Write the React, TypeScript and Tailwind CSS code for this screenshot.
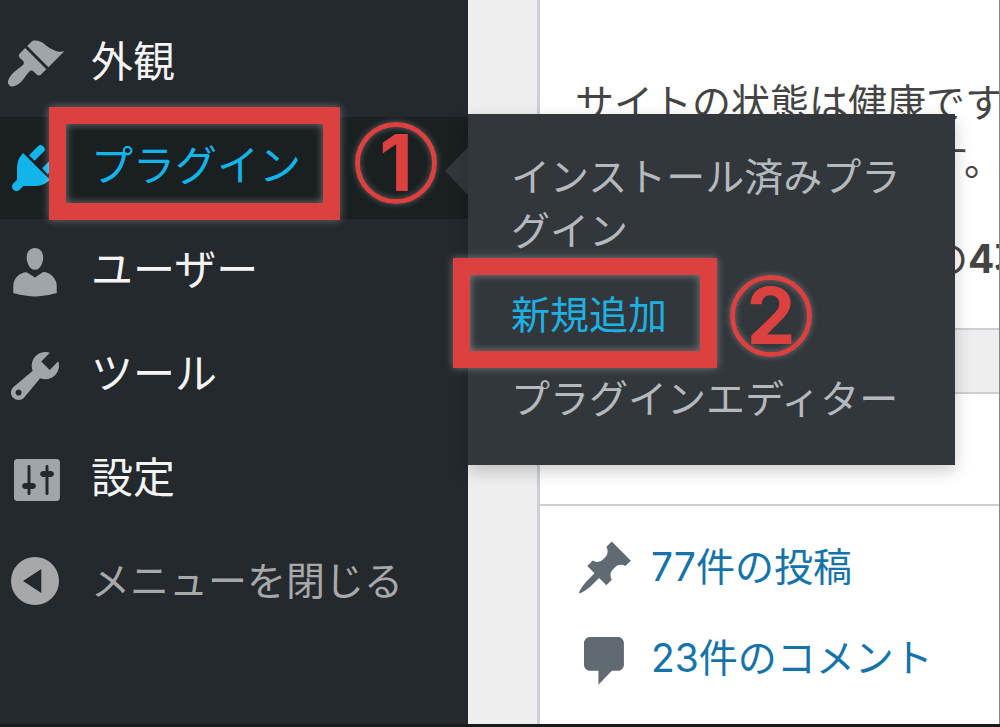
import type { ReactNode } from 'react';

const icons = {
  appearance:
    'M14.48 11.06L7.41 3.99l1.5-1.5c.5-.56 2.3-.47 3.51.32 1.21.8 1.43 1.28 2.91 2.1 1.18.64 2.45 1.26 4.45.85zm-.71.71L6.7 4.7 4.93 6.47c-.39.39-.39 1.02 0 1.41l1.06 1.06c.39.39.39 1.03 0 1.42-.6.6-1.43 1.11-2.21 1.69-.35.26-.7.53-1.01.84C1.43 14.23.4 16.08 1.4 17.07c.99 1 2.84-.03 4.18-1.36.31-.31.58-.66.85-1.02.57-.78 1.08-1.61 1.69-2.21.39-.39 1.02-.39 1.41 0l1.06 1.06c.39.39 1.02.39 1.41 0z',
  plugins:
    'M13.11 4.36L9.87 7.6 8 5.73l3.24-3.24c.35-.34 1.05-.2 1.56.32.52.51.66 1.21.31 1.55zm-8 1.77l.91-1.12 9.01 9.01-1.19.84c-.71.71-2.63 1.16-3.82 1.16H6.14L4.9 17.26c-.59.59-1.54.59-2.12 0-.59-.58-.59-1.53 0-2.12l1.24-1.24v-3.88c0-1.13.4-3.19 1.09-3.89zm7.26 3.97l3.24-3.24c.34-.35 1.04-.21 1.55.31.52.51.66 1.21.31 1.55l-3.24 3.25z',
  users:
    'M10 9.25c-2.27 0-2.73-3.44-2.73-3.44C7 4.02 7.82 2 9.97 2c2.16 0 2.98 2.02 2.71 3.81 0 0-.41 3.44-2.68 3.44zm0 2.57L12.72 10c2.39 0 4.52 2.33 4.52 4.53v2.49s-3.65 1.13-7.24 1.13c-3.65 0-7.24-1.13-7.24-1.13v-2.49c0-2.25 1.94-4.48 4.47-4.48z',
  tools:
    'M16.68 9.77c-1.34 1.34-3.3 1.67-4.95.99l-5.41 6.52c-.99.99-2.59.99-3.58 0s-.99-2.59 0-3.57l6.52-5.42c-.68-1.65-.35-3.61.99-4.95 1.28-1.28 3.12-1.62 4.72-1.06l-2.89 2.89 2.82 2.82 2.86-2.87c.53 1.58.18 3.39-1.08 4.65zM3.81 16.21c.4.39 1.04.39 1.43 0 .4-.4.4-1.04 0-1.43-.39-.4-1.03-.4-1.43 0-.39.39-.39 1.03 0 1.43z',
  settings:
    'M18.3 16V4c0-.55-.45-1-1-1H4c-.55 0-1 .45-1 1v12c0 .55.45 1 1 1h13.3c.55 0 1-.45 1-1zM8.5 11h.8c.55 0 1 .45 1 1s-.45 1-1 1h-.8v1.5c0 .28-.22.5-.5.5s-.5-.22-.5-.5V13h-.8c-.55 0-1-.45-1-1s.45-1 1-1h.8V5.5c0-.28.22-.5.5-.5s.5.22.5.5V11zm5-2h-.8c-.55 0-1-.45-1-1s.45-1 1-1h.8V5.5c0-.28.22-.5.5-.5s.5.22.5.5V7h.8c.55 0 1 .45 1 1s-.45 1-1 1h-.8v5.5c0 .28-.22.5-.5.5s-.5-.22-.5-.5V9z',
  collapse: 'M10 2a8 8 0 1 0 0 16a8 8 0 1 0 0-16zM12.1 6v8L6 10z',
  post:
    'M10.44 3.02l1.82-1.82 6.36 6.35-1.83 1.82c-1.05-.68-2.48-.57-3.41.36l-.75.75c-.92.93-1.04 2.35-.35 3.41l-1.83 1.82-2.41-2.41-2.8 2.79c-.42.42-3.38 2.71-3.8 2.29s1.86-3.39 2.28-3.81l2.79-2.79L4.1 9.36l1.83-1.82c1.05.69 2.48.57 3.4-.36l.75-.75c.93-.92 1.05-2.35.36-3.41z',
  comments: 'M5 2.7h9.3c1.1 0 2 .9 2 2v7.2c0 1.1-.9 2-2 2h-2l-4.5 4.7v-4.7H5c-1.1 0-2-.9-2-2V4.7c0-1.1.9-2 2-2z',
};

const Icon = ({ name }: { name: keyof typeof icons }) => (
  <svg viewBox="0 0 20 20" className="size-[60px] shrink-0" fill="currentColor" fillRule="evenodd" aria-hidden="true">
    <path d={icons[name]} />
  </svg>
);

const MenuLink = ({ icon, children }: { icon: keyof typeof icons; children: ReactNode }) => (
  <a href="#" className="flex h-[102px] items-center gap-[26px] pl-[5px] text-[#a0a5aa]">
    <Icon name={icon} />
    <span className="pb-[6px] text-[42px] text-[#f4f4f4]">{children}</span>
  </a>
);

// red frame and numbered circle pointing out a step
const Frame = ({ className }: { className: string }) => (
  <span
    className={`pointer-events-none absolute z-20 border-[17px] border-[#dc4140] shadow-[0_0_8px_rgba(255,255,255,0.35)] ${className}`}
  >
    <span className="block size-full shadow-[inset_0_0_8px_rgba(255,255,255,0.4)]" />
  </span>
);

const Step = ({ n, className }: { n: number; className: string }) => (
  <span
    className={`pointer-events-none absolute z-20 flex size-[82px] items-center justify-center rounded-full border-[5px] border-[#dc4140] font-[Inter] text-[78px] leading-none font-bold text-[#dc4140] shadow-[0_0_6px_rgba(255,255,255,0.3),inset_0_0_6px_rgba(255,255,255,0.3)] ${className}`}
  >
    {n}
  </span>
);

export default function App() {
  return (
    <div className="flex min-h-screen flex-col overflow-hidden bg-[#eeeeef] font-[Inter,'Noto_Sans_CJK_JP',sans-serif]">
      <div className="flex flex-1">
        <nav className="relative z-10 w-[468px] shrink-0 bg-[#24292d]">
          <ul className="flex flex-col gap-[2px] pt-[13px]">
            <li>
              <MenuLink icon="appearance">外観</MenuLink>
            </li>
            <li className="relative bg-[#1a1f22]">
              <a href="#" className="flex h-[102px] items-center gap-[26px] pl-[5px] text-[#12b5ea]">
                <Icon name="plugins" />
                <span className="pb-[6px] text-[42px]">プラグイン</span>
              </a>
              <Frame className="-top-[10px] left-[49px] h-[113px] w-[291px]" />
              <Step n={1} className="top-[5px] left-[355px]" />
              <span className="absolute top-[30px] right-0 border-y-[24px] border-r-[23px] border-y-transparent border-r-[#32373c]" />
              <ul className="absolute -top-[3px] left-full w-[487px] bg-[#32373c] px-[43px] pt-[21px] pb-6 text-[39px] leading-[54px] text-[#b4b9be] shadow-[0_6px_16px_rgba(0,0,0,0.2)]">
                <li>
                  <a href="#" className="block py-[15px]">インストール済みプラグイン</a>
                </li>
                <li className="relative">
                  <a href="#" className="block py-[15px] text-[#1eb0e2]">新規追加</a>
                  <Frame className="-top-[15px] -left-[58px] h-[110px] w-[264px]" />
                  <Step n={2} className="top-[2px] left-[219px]" />
                </li>
                <li>
                  <a href="#" className="block py-[15px]">プラグインエディター</a>
                </li>
              </ul>
            </li>
            <li>
              <MenuLink icon="users">ユーザー</MenuLink>
            </li>
            <li>
              <MenuLink icon="tools">ツール</MenuLink>
            </li>
            <li>
              <MenuLink icon="settings">設定</MenuLink>
            </li>
            <li>
              <button type="button" className="flex h-24 w-full items-center gap-[26px] pl-[5px] text-[39px] text-[#a7a8a9]">
                <Icon name="collapse" />
                メニューを閉じる
              </button>
            </li>
          </ul>
        </nav>

        <main className="flex min-w-0 flex-1 flex-col gap-[62px] border-r border-[#85888a] pl-[69px] text-[39px] whitespace-nowrap">
          <section className="overflow-hidden border-b-2 border-l-[3px] border-[#ccd0d4] bg-white pt-[74px] pb-10 pl-[35px] leading-[58px] text-[#444]">
            <p>サイトの状態は健康です</p>
            <p className="pl-[354px]">す。</p>
            <p className="mt-10 pl-[354px]">
              の<strong>4項</strong>
            </p>
          </section>

          <section className="flex-1 border-t-2 border-l-[3px] border-[#ccd0d4] bg-white">
            <div className="h-[112px] border-b-2 border-[#ccd0d4]" />
            <ul className="pt-4 pb-5 pl-[35px] text-[#1673aa]">
              <li className="flex h-[91px] items-center gap-4">
                <span className="text-[#606a73]">
                  <Icon name="post" />
                </span>
                <a href="#">77件の投稿</a>
              </li>
              <li className="flex h-[91px] items-center gap-4">
                <span className="text-[#606a73]">
                  <Icon name="comments" />
                </span>
                <a href="#">23件のコメント</a>
              </li>
            </ul>
          </section>
        </main>
      </div>
      <div className="h-1 bg-[#17191b]" />
    </div>
  );
}
